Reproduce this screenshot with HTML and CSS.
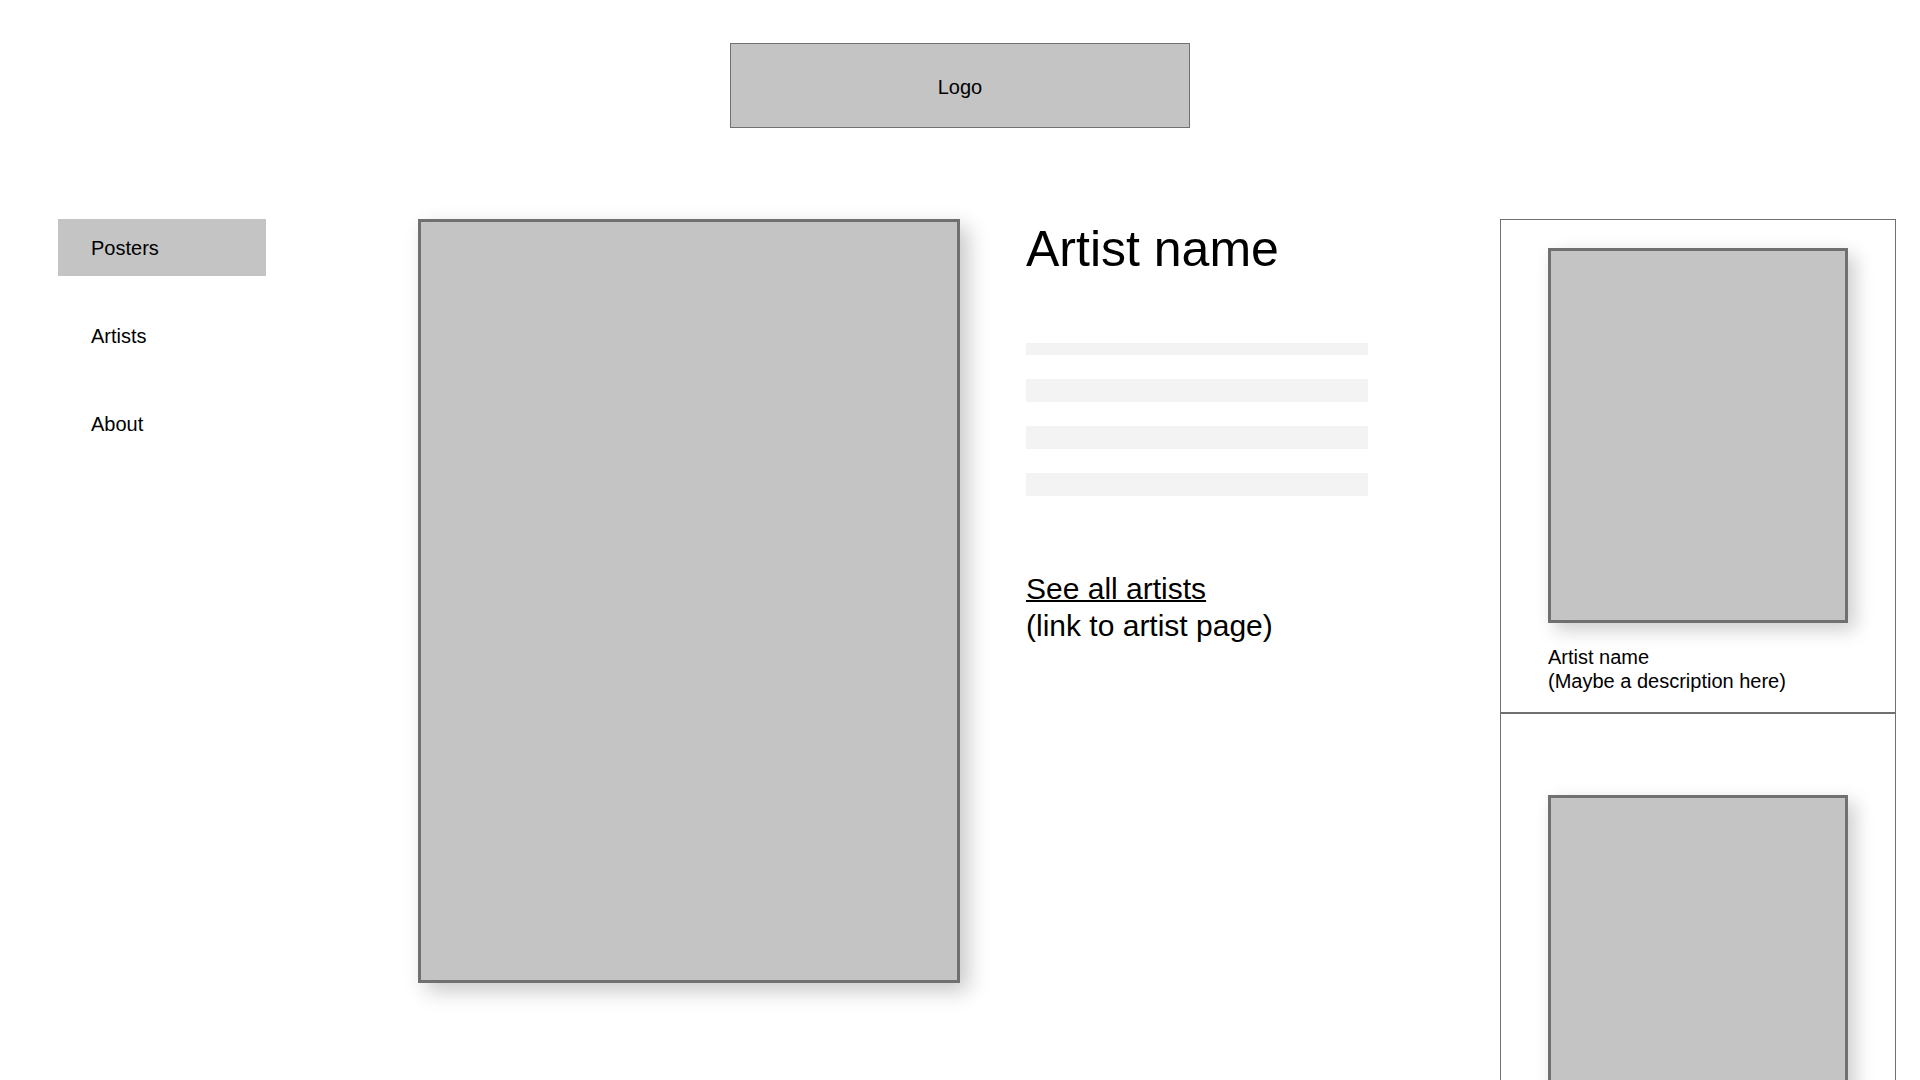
FILE: index.html
```html
<!DOCTYPE html>
<html lang="en">
<head>
<meta charset="utf-8">
<title>Poster - Artist</title>
<link rel="stylesheet" href="styles.css">
</head>
<body>
  <header class="site-header">
    <div class="logo">Logo</div>
  </header>
  <main class="layout">
    <nav class="side-nav">
      <a class="nav-item active" href="#">Posters</a>
      <a class="nav-item" href="#">Artists</a>
      <a class="nav-item" href="#">About</a>
    </nav>
    <div class="poster"></div>
    <section class="info">
      <h1 class="artist-title">Artist name</h1>
      <div class="text-lines">
        <div class="line line-thin"></div>
        <div class="line"></div>
        <div class="line"></div>
        <div class="line"></div>
      </div>
      <p class="artist-link"><a href="#">See all artists</a><br>(link to artist page)</p>
    </section>
    <aside class="related">
      <div class="card card-first">
        <div class="thumb"></div>
        <p class="caption">Artist name<br>(Maybe a description here)</p>
      </div>
      <div class="card card-second">
        <div class="thumb"></div>
      </div>
    </aside>
  </main>
</body>
</html>
```

FILE: styles.css
```css
html, body {
  margin: 0;
  padding: 0;
  height: 1080px;
  overflow: hidden;
  background: #ffffff;
}

body {
  font-family: "Liberation Sans", Arial, Helvetica, sans-serif;
  color: #000000;
}

.site-header {
  display: flex;
  justify-content: center;
  padding-top: 43px;
  margin-bottom: 91px;
}

.logo {
  box-sizing: border-box;
  width: 460px;
  height: 85px;
  padding-top: 4px;
  background: #c4c4c4;
  border: 1px solid #707070;
  display: flex;
  align-items: center;
  justify-content: center;
  font-size: 20px;
}

.layout {
  display: flex;
  align-items: flex-start;
  padding: 0 24px 0 58px;
}

.side-nav {
  width: 208px;
  margin-right: 152px;
  display: flex;
  flex-direction: column;
  gap: 31px;
}

.nav-item {
  box-sizing: border-box;
  display: flex;
  align-items: center;
  height: 57px;
  padding: 2px 0 0 33px;
  font-size: 20px;
  color: #000000;
  text-decoration: none;
}

.nav-item.active {
  background: #c4c4c4;
}

.poster {
  box-sizing: border-box;
  width: 542px;
  height: 764px;
  flex: none;
  background: #c4c4c4;
  border: 3px solid #707070;
  box-shadow: 8px 8px 20px rgba(0, 0, 0, 0.22);
}

.info {
  flex: 1;
  margin-left: 66px;
}

.artist-title {
  margin: 0;
  font-size: 50px;
  font-weight: 400;
  line-height: 60px;
}

.text-lines {
  margin-top: 64px;
  width: 342px;
  display: flex;
  flex-direction: column;
  gap: 24px;
}

.line {
  height: 23px;
  background: #f3f3f3;
}

.line.line-thin {
  height: 12px;
}

.artist-link {
  margin: 74px 0 0;
  font-size: 30px;
  line-height: 37px;
}

.artist-link a {
  color: #000000;
  text-decoration: underline;
  text-decoration-thickness: 1.5px;
}

.related {
  box-sizing: border-box;
  width: 396px;
  flex: none;
  border: 1px solid #707070;
}

.card {
  display: flex;
  flex-direction: column;
  align-items: center;
}

.card-first {
  padding: 28px 0 19px;
  border-bottom: 2px solid #707070;
}

.card-second {
  padding-top: 81px;
  height: 400px;
}

.thumb {
  box-sizing: border-box;
  width: 300px;
  height: 375px;
  flex: none;
  background: #c4c4c4;
  border: 3px solid #707070;
  box-shadow: 7px 7px 18px rgba(0, 0, 0, 0.2);
}

.caption {
  width: 300px;
  margin: 22px 0 0;
  font-size: 20px;
  line-height: 24px;
}
```
